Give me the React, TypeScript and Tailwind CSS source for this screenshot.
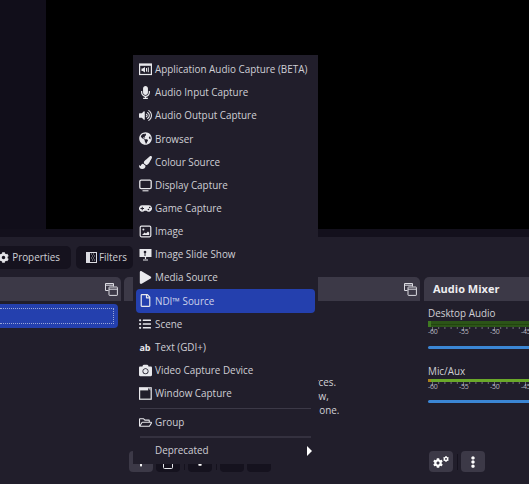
import React from "react";
import {
  FaVolumeUp, FaMicrophone, FaGlobeAmericas, FaPaintBrush, FaGamepad, FaPlay, FaRegFile,
  FaListUl, FaCamera, FaRegFolderOpen, FaCog, FaEllipsisV, FaPlus,
} from "react-icons/fa";

const Monitor = () => (
  <svg width="13" height="13" viewBox="0 0 13 13" fill="none">
    <rect x="0.8" y="1.2" width="11.4" height="8.4" rx="1.4" stroke="#e8e8ec" strokeWidth="1.3" />
    <path d="M3.5 11.8h6" stroke="#e8e8ec" strokeWidth="1.1" />
  </svg>
);
const AppAudio = () => (
  <svg width="13" height="13" viewBox="0 0 13 13" fill="none">
    <rect x="0.6" y="1" width="11.8" height="10.5" stroke="#e8e8ec" strokeWidth="1.2" />
    <rect x="0.6" y="1" width="11.8" height="1.8" fill="#e8e8ec" />
    <path d="M2.5 5.5h1.2L6 4v5.6L3.7 8H2.5z" fill="#e8e8ec" />
    <path d="M7.5 5v3.6M9.3 4.4v4.8" stroke="#e8e8ec" />
  </svg>
);
const Slides = () => (
  <svg width="13" height="13" viewBox="0 0 13 13" fill="none">
    <path d="M0.5 1h12v8h-12z" fill="#e8e8ec" />
    <circle cx="6" cy="4" r="1.3" fill="#211e2b" />
    <path d="M6 5v3" stroke="#211e2b" />
    <path d="M6.5 9v2M4 12h5" stroke="#e8e8ec" strokeWidth="1.2" />
  </svg>
);
const Picture = () => (
  <svg width="13" height="13" viewBox="0 0 13 13" fill="none">
    <rect x="1.2" y="1.2" width="10.6" height="10.6" rx="1.2" stroke="#e8e8ec" strokeWidth="1.2" />
    <circle cx="4.4" cy="4.4" r="1" fill="#e8e8ec" />
    <path d="M3 10l2.6-2.6 1.4 1.2 2-2.2 1.2 1.4V10z" fill="#e8e8ec" />
  </svg>
);
const Win = () => (
  <svg width="13" height="13" viewBox="0 0 13 13" fill="none">
    <rect x="0.6" y="0.8" width="11.6" height="11.4" stroke="#e8e8ec" strokeWidth="1.2" />
    <rect x="0.6" y="0.8" width="8.6" height="2.6" fill="#e8e8ec" />
    <path d="M10 1.5l1.6 1.4" stroke="#e8e8ec" />
  </svg>
);
const Pop = () => (
  <svg width="13" height="13" viewBox="0 0 13 13" fill="none" stroke="#dcdce2">
    <path d="M3.5 7.5h-3v-7h8v3" />
    <path d="M0.5 2.2h8" />
    <rect x="4" y="4" width="8.4" height="8.4" rx="0.5" />
    <path d="M4 6.2h8.4" />
  </svg>
);
const FilterIcon = () => (
  <svg width="11" height="11" viewBox="0 0 11 11" fill="none">
    <rect x="0.5" y="0.5" width="10" height="10" stroke="#dcdce2" />
    <rect x="1" y="1" width="3" height="9" fill="#dcdce2" />
    <path d="M5 2h1M7 2h1M6 4h1M8 4h1M5 6h1M7 6h1M6 8h1M8 8h1" stroke="#a8a8ae" />
  </svg>
);
const Bin = () => (
  <svg width="12" height="14" viewBox="0 0 12 14" fill="none">
    <path d="M1 1.5h10M1.5 1.5v11a1 1 0 0 0 1 1h7a1 1 0 0 0 1-1v-11" stroke="#e8e8ec" strokeWidth="1" />
  </svg>
);

const sz = "text-[#e8e8ec] text-[13px]";
const items: [React.ReactNode, string][] = [
  [<AppAudio />, "Application Audio Capture (BETA)"],
  [<FaMicrophone className={sz} />, "Audio Input Capture"],
  [<FaVolumeUp className={sz} />, "Audio Output Capture"],
  [<FaGlobeAmericas className={sz} />, "Browser"],
  [<FaPaintBrush className={sz} />, "Colour Source"],
  [<Monitor />, "Display Capture"],
  [<FaGamepad className={sz} />, "Game Capture"],
  [<Picture />, "Image"],
  [<Slides />, "Image Slide Show"],
  [<FaPlay className={sz} />, "Media Source"],
  [<FaRegFile className={sz} />, "NDI™ Source"],
  [<FaListUl className="text-[#e8e8ec] text-[12px]" />, "Scene"],
  [<span className="text-[#e8e8ec] text-[9px] font-bold leading-none">ab</span>, "Text (GDI+)"],
  [<FaCamera className={sz} />, "Video Capture Device"],
  [<Win />, "Window Capture"],
];

const Meter = ({ top }: { top: React.ReactNode }) => (
  <div className="flex flex-col w-[125px]">
    {top}
    <svg width="125" height="4" viewBox="0 0 125 4" className="block">
      {Array.from({ length: 21 }).map((_, i) => (
        <path key={i} d={`M${4.5 + i * 6.2} 0v${i % 5 === 0 ? 4 : 2}`} stroke="#85858d" strokeWidth="0.8" />
      ))}
    </svg>
    <div className="-mt-[3px] flex text-[7px] leading-[8px] text-[#b8b8c0] tracking-[-0.3px]">
      {["-60", "-55", "-50", "-45"].map((t) => (
        <span key={t} className="w-[31px] shrink-0">{t}</span>
      ))}
    </div>
  </div>
);

const ToolBtn = ({ className, children }: { className: string; children?: React.ReactNode }) => (
  <div className={`w-[24px] h-[21px] shrink-0 rounded-[4px] flex items-center justify-center text-white text-[11px] ${className}`}>
    {children}
  </div>
);

export default function App() {
  return (
    <div
      className="relative w-[529px] h-[484px] overflow-hidden bg-[#211e2b] text-[#cfcfd5] text-[9.9px] flex flex-col"
      style={{ fontFamily: '"Open Sans", sans-serif' }}
    >
      <div className="flex h-[229px] shrink-0">
        <div className="w-[46px] bg-[#110e1a]" />
        <div className="flex-1 bg-black" />
      </div>
      <div className="h-[8px] bg-[#13101c] shrink-0" />

      <div className="flex mt-[9px] gap-[5px] h-[23px] -ml-[8px] shrink-0">
        <div className="w-[79px] rounded-[5px] bg-[#15121e] flex items-center justify-end gap-[3px] pr-[11px]">
          <FaCog className="text-[11px] text-[#e4e4e8]" />
          <span>Properties</span>
        </div>
        <div className="w-[57px] rounded-[5px] bg-[#15121e] flex items-center gap-[2px] pl-[10px]">
          <FilterIcon />
          <span>Filters</span>
        </div>
      </div>

      <div className="flex mt-[8px] flex-1 min-h-0">
        <div className="w-[121px] flex flex-col">
          <div className="h-[24px] bg-[#3c3947] rounded-tr-[5px] flex items-center justify-end pr-[3px]">
            <Pop />
          </div>
          <div className="mt-[3px] h-[24px] bg-[#2440ae] rounded-r-[4px] mr-[3px] p-[4px] pl-0">
            <div className="h-full border border-dotted border-l-0 border-[#9aa6d8]" />
          </div>
        </div>

        <div className="ml-[3px] w-[296px] flex flex-col">
          <div className="h-[24px] bg-[#3c3947] rounded-t-[5px] flex items-center justify-end pr-[3px]">
            <Pop />
          </div>
          <div className="mt-[74px] text-center leading-[14px] text-[#d0d0d6]">
            <p>You don't have any sources.</p>
            <p>Click the + button below,</p>
            <p>or right click here to add one.</p>
          </div>
          <div className="mt-[34px] flex items-center pl-[5px]">
            <ToolBtn className="bg-[#3c3947]"><FaPlus className="text-[10px]" /></ToolBtn>
            <ToolBtn className="ml-[3px] bg-[#15121e]"><Bin /></ToolBtn>
            <div className="w-[1px] h-[16px] mx-[3.5px] bg-[#15121e]" />
            <ToolBtn className="bg-[#15121e]"><FaCog className="text-[12px] -mt-[3px]" /></ToolBtn>
            <div className="w-[1px] h-[16px] mx-[3.5px] bg-[#15121e]" />
            <ToolBtn className="bg-[#15121e]" />
            <ToolBtn className="ml-[3px] bg-[#15121e]" />
          </div>
        </div>

        <div className="ml-[4px] flex-1 flex flex-col min-w-0">
          <div className="h-[24px] bg-[#3c3947] rounded-tl-[5px] flex items-center pl-[9px] font-bold text-[11px] text-[#eeeef0]">
            Audio Mixer
          </div>
          <div className="pl-[4px] overflow-hidden flex-1 flex flex-col">
            <div className="mt-[5px] leading-[14px]">Desktop Audio</div>
            <div className="mt-[1px]">
              <Meter
                top={
                  <div className="h-[6px] bg-[#2c5518] flex">
                    <div className="w-[3px] bg-[#3f7a22]" />
                    <div className="flex-1 flex flex-col justify-center">
                      <div className="h-[1px] bg-[#22440f]" />
                    </div>
                  </div>
                }
              />
            </div>
            <div className="mt-[10px] h-[3px] bg-[#3b86d4] rounded-l-[2px] w-[125px] shrink-0" />
            <div className="mt-[15px] leading-[14px]">Mic/Aux</div>
            <div className="mt-[1px]">
              <Meter
                top={
                  <div className="h-[3px] bg-[#6aa82a] flex">
                    <div className="w-[3px] bg-[#a8801c]" />
                  </div>
                }
              />
            </div>
            <div className="mt-[9px] h-[3px] bg-[#3b86d4] rounded-l-[2px] w-[125px] shrink-0" />
            <div className="mt-[48px] flex items-center pl-[1px]">
              <ToolBtn className="bg-[#3c3947] gap-0">
                <FaCog className="text-[10px] mt-[3px]" />
                <FaCog className="text-[6px] -mt-[5px]" />
              </ToolBtn>
              <div className="w-[1px] h-[16px] mx-[3.5px] bg-[#15121e]" />
              <ToolBtn className="bg-[#3c3947]"><FaEllipsisV className="text-[12px]" /></ToolBtn>
            </div>
          </div>
        </div>
      </div>

      <div className="absolute left-[133px] top-[55px] w-[185px] h-[409px] bg-[#211e2b] flex flex-col py-[3px]">
        {items.map(([icon, label]) => (
          <div
            key={label}
            className={`mx-[3px] h-[23.15px] shrink-0 rounded-[4px] flex items-center pl-[2px] ${
              label.startsWith("NDI") ? "bg-[#2440ae] text-[#cdd2ea]" : ""
            }`}
          >
            <span className="w-[14px] flex justify-center shrink-0">{icon}</span>
            <span className="ml-[3px] whitespace-nowrap">{label}</span>
          </div>
        ))}
        <div className="mx-[7px] mt-[3px] h-[1px] bg-[#3c3947] shrink-0" />
        <div className="mx-[3px] mt-[2px] h-[23px] shrink-0 flex items-center pl-[2px]">
          <span className="w-[14px] flex justify-center shrink-0"><FaRegFolderOpen className={sz} /></span>
          <span className="ml-[3px]">Group</span>
        </div>
        <div className="mx-[7px] mt-[2px] h-[2px] bg-[#34313f] shrink-0" />
        <div className="mx-[3px] mt-[1px] h-[23px] shrink-0 flex items-center justify-between pl-[19px] pr-[3px]">
          <span>Deprecated</span>
          <span className="w-0 h-0 border-y-[5px] border-y-transparent border-l-[5px] border-l-white" />
        </div>
      </div>
    </div>
  );
}
